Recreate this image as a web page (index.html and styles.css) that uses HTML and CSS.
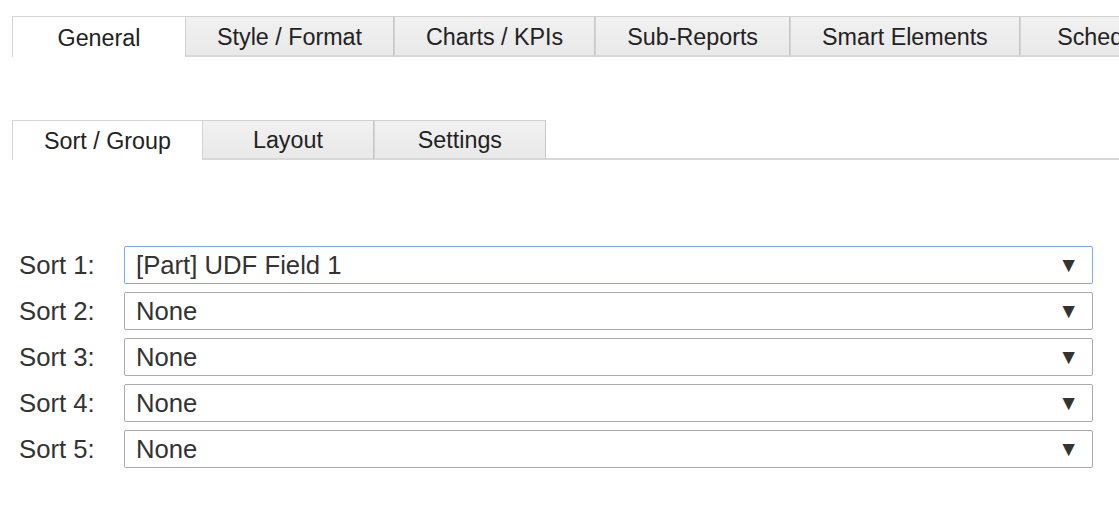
FILE: index.html
```html
<!DOCTYPE html>
<html lang="en">
<head>
    <meta charset="UTF-8">
    <title>Report Settings</title>
    <link rel="stylesheet" href="styles.css">
</head>
<body>
    <div class="tabs tabs-main">
        <div class="tab active">General</div>
        <div class="tab">Style / Format</div>
        <div class="tab">Charts / KPIs</div>
        <div class="tab">Sub-Reports</div>
        <div class="tab">Smart Elements</div>
        <div class="tab">Schedule</div>
    </div>

    <div class="tabs tabs-sub">
        <div class="tab active">Sort / Group</div>
        <div class="tab">Layout</div>
        <div class="tab">Settings</div>
        <div class="tabs-line"></div>
    </div>

    <div class="sort-form">
        <div class="sort-row">
            <label>Sort 1:</label>
            <div class="select focused"><span>[Part] UDF Field 1</span><span class="arrow">&#9660;</span></div>
        </div>
        <div class="sort-row">
            <label>Sort 2:</label>
            <div class="select"><span>None</span><span class="arrow">&#9660;</span></div>
        </div>
        <div class="sort-row">
            <label>Sort 3:</label>
            <div class="select"><span>None</span><span class="arrow">&#9660;</span></div>
        </div>
        <div class="sort-row">
            <label>Sort 4:</label>
            <div class="select"><span>None</span><span class="arrow">&#9660;</span></div>
        </div>
        <div class="sort-row">
            <label>Sort 5:</label>
            <div class="select"><span>None</span><span class="arrow">&#9660;</span></div>
        </div>
    </div>
</body>
</html>
```

FILE: styles.css
```css
body {
    font-family: "Liberation Sans", Arial, sans-serif;
    margin: 0;
    background: #fff;
    color: #222;
    overflow: hidden;
}

.tabs {
    display: flex;
    padding-left: 12px;
    white-space: nowrap;
}

.tabs-main {
    margin-top: 16px;
    height: 41px;
}

.tabs-sub {
    margin-top: 63px;
    height: 40px;
}

.tab {
    box-sizing: border-box;
    min-width: 172px;
    padding: 0 31px;
    font-size: 23.3px;
    display: flex;
    align-items: center;
    justify-content: center;
    padding-top: 2px;
    background: #ececec;
    background-image: linear-gradient(#f1f1f1, #e9e9e9);
    border: 1px solid #d2d2d2;
    border-right: 1px solid #c8c8c8;
    border-bottom: 2px solid #d8d8d8;
    flex-shrink: 0;
}

.tab.active {
    min-width: 173px;
    background: #fff;
    border-color: #d6d6d6;
    border-bottom: none;
    border-right: none;
}

.tabs-line {
    flex: 1;
    align-self: flex-end;
    border-bottom: 2px solid #d8d8d8;
}

.sort-form {
    margin-top: 86px;
    padding-left: 19px;
    padding-right: 26px;
    display: flex;
    flex-direction: column;
    gap: 8px;
}

.sort-row {
    display: flex;
    align-items: center;
}

.sort-row label {
    width: 105px;
    font-size: 25.7px;
    color: #333;
}

.select {
    flex: 1;
    box-sizing: border-box;
    height: 38px;
    border: 1px solid #aaa;
    border-radius: 2px;
    display: flex;
    align-items: center;
    justify-content: space-between;
    padding: 0 13px 0 11px;
    font-size: 25.7px;
    color: #333;
}

.select.focused {
    border-color: #7ea8e6;
}

.arrow {
    font-size: 21px;
    color: #333;
}
```
